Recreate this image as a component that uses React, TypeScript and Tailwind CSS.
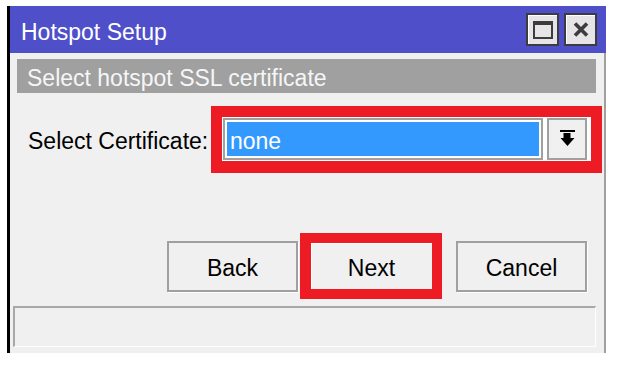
import React from "react"

function TitleButton({ children }: { children: React.ReactNode }) {
  return (
    <div className="w-[33px] h-[33px] border-2 border-[#3c3c3c] bg-[#e6e4e6] flex items-center justify-center shadow-[inset_1px_1px_0_#ffffff]">
      {children}
    </div>
  )
}

function DialogButton({ label }: { label: string }) {
  return (
    <button className="w-[131px] h-[51px] pt-[4px] border-2 border-[#a0a0a0] bg-[#f0f0f0] text-[23px] text-black shadow-[1px_1px_0_#ffffff]">
      {label}
    </button>
  )
}

export default function App() {
  return (
    <div
      className="w-[620px] h-[375px] bg-white pt-[6px] pl-[7px]"
      style={{ fontFamily: '"Liberation Sans", Arial, sans-serif' }}
    >
      <div className="w-[599px] h-[347px] flex flex-col border-l-[3px] border-black">
        {/* Title bar */}
        <div className="h-[47px] shrink-0 bg-[#4e4fc9] flex items-center justify-between pl-[11px] pr-[9px]">
          <span className="text-white text-[23px] leading-none pt-[6px]">Hotspot Setup</span>
          <div className="flex gap-[5px]">
            <TitleButton>
              <svg width="20" height="20" viewBox="0 0 20 20">
                <rect x="1" y="2" width="18" height="16" fill="none" stroke="#3c3c3c" strokeWidth="2" />
                <rect x="0" y="1" width="20" height="4" fill="#3c3c3c" />
              </svg>
            </TitleButton>
            <TitleButton>
              <svg width="16" height="15" viewBox="0 0 16 15">
                <path d="M2 1.5 L14 13.5 M14 1.5 L2 13.5" stroke="#3c3c3c" strokeWidth="3.6" />
              </svg>
            </TitleButton>
          </div>
        </div>

        {/* Body */}
        <div className="flex-1 flex flex-col bg-[#f0f0f0] border-r-2 border-[#a0a0a0] pb-[6px]">
          <div className="mt-[6px] ml-[7px] mr-[8px] h-[34px] bg-[#a0a0a0] flex items-center pl-[10px]">
            <span className="text-[#f6f6f6] text-[23px] leading-none pt-[4px]">Select hotspot SSL certificate</span>
          </div>

          <div className="mt-[13px] flex items-center pl-[18px] pr-[2px]">
            <span className="text-black text-[23px] leading-none pt-[4px]">Select Certificate:</span>
            <div className="ml-auto w-[391px] h-[67px] border-[11px] border-b-[12px] border-[#ed1c24]">
              <div className="h-full bg-white p-[1px] pr-[4px] flex gap-[4px]">
                <div className="w-[320px] border-2 border-[#a0a0a0] bg-white p-[2px]">
                  <div className="h-full bg-[#3399ff] flex items-center pl-[3px]">
                    <span className="text-white text-[23px] leading-none pt-[4px]">none</span>
                  </div>
                </div>
                <div className="w-[40px] border-2 border-[#a0a0a0] bg-[#f0f0f0] flex items-center justify-center">
                  <svg width="15" height="18" viewBox="0 0 15 18">
                    <rect x="0" y="0" width="15" height="2" fill="#000" />
                    <rect x="3.5" y="3" width="7" height="6" fill="#000" />
                    <path d="M0.5 8 L14.5 8 L7.5 16 Z" fill="#000" />
                  </svg>
                </div>
              </div>
            </div>
          </div>

          <div className="mt-[60px] flex items-center justify-end pr-[17px]">
            <DialogButton label="Back" />
            <div className="ml-[2px] w-[142px] h-[66px] border-[10px] border-l-[11px] border-[#ed1c24] bg-[#f0f0f0]">
              <button className="w-full h-full pt-[4px] bg-[#f0f0f0] text-[23px] text-black shadow-[inset_1px_1px_0_#ffffff]">
                Next
              </button>
            </div>
            <div className="ml-[14px]">
              <DialogButton label="Cancel" />
            </div>
          </div>

          <div className="mt-[7px] ml-[3px] mr-[8px] h-[41px] border-t-2 border-l-2 border-[#a8a8a8] border-b border-r border-b-white border-r-white" />
        </div>
      </div>
    </div>
  )
}
